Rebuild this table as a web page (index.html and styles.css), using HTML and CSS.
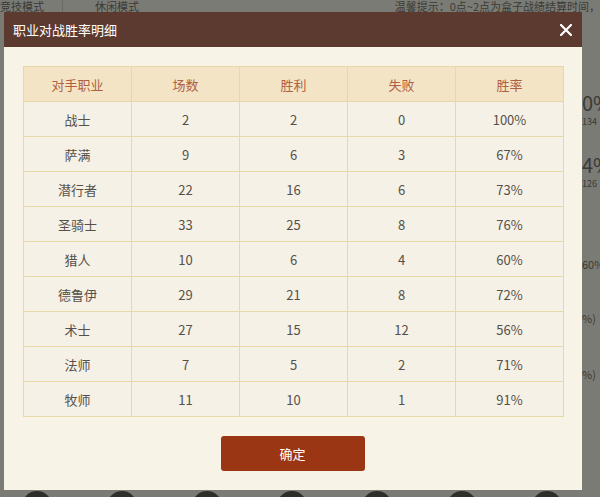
FILE: index.html
```html
<!DOCTYPE html>
<html lang="zh">
<head>
<meta charset="utf-8">
<link rel="stylesheet" href="styles.css">
</head>
<body>
<div class="page">
  <div class="topbar">
    <span class="tab">竞技模式</span>
    <span class="sep"></span>
    <span class="tab">休闲模式</span>
    <span class="tip">温馨提示：0点~2点为盒子战绩结算时间，</span>
  </div>
  <div class="side">
    <div class="big">0%</div>
    <div class="small">134</div>
    <div class="big b2">4%</div>
    <div class="small">126</div>
    <div class="mid m1">60%</div>
    <div class="mid m2">%)</div>
    <div class="mid m3">%)</div>
  </div>
  <div class="dots">
    <span></span><span></span><span></span><span></span><span></span><span></span><span></span>
  </div>
</div>

<div class="modal">
  <div class="modal-head">
    <span class="modal-title">职业对战胜率明细</span>
    <svg class="close" width="12" height="12" viewBox="0 0 12 12"><path d="M1 1L11 11M11 1L1 11" stroke="#fff" stroke-width="2.2" stroke-linecap="round"/></svg>
  </div>
  <div class="modal-body">
    <table class="stats">
      <thead>
        <tr><th>对手职业</th><th>场数</th><th>胜利</th><th>失败</th><th>胜率</th></tr>
      </thead>
      <tbody>
        <tr><td>战士</td><td>2</td><td>2</td><td>0</td><td>100%</td></tr>
        <tr><td>萨满</td><td>9</td><td>6</td><td>3</td><td>67%</td></tr>
        <tr><td>潜行者</td><td>22</td><td>16</td><td>6</td><td>73%</td></tr>
        <tr><td>圣骑士</td><td>33</td><td>25</td><td>8</td><td>76%</td></tr>
        <tr><td>猎人</td><td>10</td><td>6</td><td>4</td><td>60%</td></tr>
        <tr><td>德鲁伊</td><td>29</td><td>21</td><td>8</td><td>72%</td></tr>
        <tr><td>术士</td><td>27</td><td>15</td><td>12</td><td>56%</td></tr>
        <tr><td>法师</td><td>7</td><td>5</td><td>2</td><td>71%</td></tr>
        <tr><td>牧师</td><td>11</td><td>10</td><td>1</td><td>91%</td></tr>
      </tbody>
    </table>
    <div class="actions">
      <button class="ok">确定</button>
    </div>
  </div>
</div>
</body>
</html>
```
FILE: styles.css
```css
html, body {
  margin: 0;
  padding: 0;
}
body {
  width: 600px;
  height: 497px;
  overflow: hidden;
  background: #7b7b75;
  font-family: "Microsoft YaHei", "Noto Sans CJK SC", "Noto Sans", sans-serif;
  position: relative;
}
.page {
  height: 497px;
  display: flex;
  flex-direction: column;
  color: #3e3e3a;
}
.topbar {
  display: flex;
  align-items: flex-start;
  height: 12px;
  font-size: 11px;
  color: #3a3a36;
  line-height: 12px;
}
.sep {
  width: 1px;
  height: 12px;
  background: #6a6a65;
  margin: 0 32px 0 18px;
}
.tip {
  margin-left: auto;
  white-space: nowrap;
}
.side {
  align-self: flex-end;
  width: 18px;
  display: flex;
  flex-direction: column;
  padding-top: 78px;
  color: #3a3a36;
  white-space: nowrap;
}
.big {
  font-size: 20px;
  line-height: 26px;
}
.b2 {
  margin-top: 24px;
}
.small {
  font-size: 9px;
  line-height: 12px;
}
.mid {
  font-size: 11px;
  line-height: 16px;
}
.m1 { margin-top: 66px; }
.m2 { margin-top: 38px; }
.m3 { margin-top: 40px; }
.dots {
  margin-top: auto;
  display: flex;
  gap: 55px;
  padding-left: 22px;
  height: 6px;
  overflow: hidden;
}
.dots span {
  width: 30px;
  height: 30px;
  border-radius: 50%;
  background: #2e2e2a;
  flex: none;
}

.modal {
  position: absolute;
  left: 4px;
  top: 12px;
  width: 578px;
  height: 478px;
  background: #f7f3e7;
  display: flex;
  flex-direction: column;
}
.modal-head {
  height: 35px;
  background: #5d3a2f;
  display: flex;
  align-items: center;
  justify-content: space-between;
  padding: 0 10px 0 9px;
}
.modal-title {
  color: #ffffff;
  font-size: 13px;
}
.close {
  display: block;
}
.modal-body {
  padding: 19px 18px 0 19px;
  display: flex;
  flex-direction: column;
}
.stats {
  width: 541px;
  border-collapse: collapse;
  table-layout: fixed;
  font-size: 13px;
  color: #555049;
}
.stats th, .stats td {
  border: 1px solid #e8d8a8;
  text-align: center;
  padding: 0;
  height: 34px;
}
.stats th {
  background: #f3e4c6;
  color: #b0603f;
  font-weight: normal;
}
.stats td {
  background: #f5f1e6;
}
.actions {
  display: flex;
  justify-content: center;
  padding-top: 19px;
  padding-right: 2px;
}
.ok {
  width: 144px;
  height: 35px;
  border: none;
  border-radius: 3px;
  background: #9a3614;
  color: #ffffff;
  font-family: inherit;
  font-size: 13px;
}
```
